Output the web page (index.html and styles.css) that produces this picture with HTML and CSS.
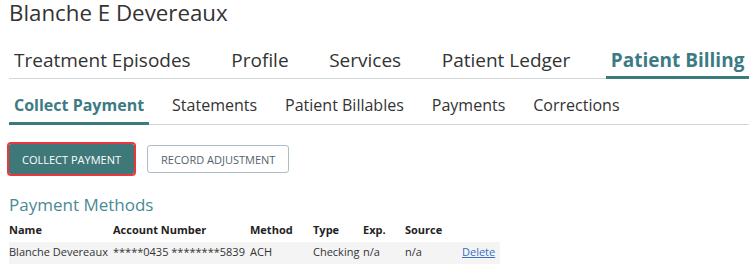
FILE: index.html
```html
<!DOCTYPE html>
<html lang="en">
<head>
    <meta charset="UTF-8">
    <meta name="viewport" content="width=device-width, initial-scale=1.0">
    <title>Patient Billing</title>
    <link rel="stylesheet" href="styles.css">
</head>
<body>
    <div class="page">
        <h1 class="patient-name">Blanche E Devereaux</h1>

        <!-- main tabs -->
        <nav class="tabs main-tabs">
            <a class="tab">Treatment Episodes</a>
            <a class="tab">Profile</a>
            <a class="tab">Services</a>
            <a class="tab">Patient Ledger</a>
            <a class="tab active">Patient Billing</a>
        </nav>

        <!-- billing sub tabs -->
        <nav class="tabs sub-tabs">
            <a class="tab active">Collect Payment</a>
            <a class="tab">Statements</a>
            <a class="tab">Patient Billables</a>
            <a class="tab">Payments</a>
            <a class="tab">Corrections</a>
        </nav>

        <div class="actions">
            <button type="button" class="btn btn-primary">COLLECT PAYMENT</button>
            <button type="button" class="btn btn-outline">RECORD ADJUSTMENT</button>
        </div>

        <h2 class="section-title">Payment Methods</h2>
        <table class="methods">
            <colgroup>
                <col class="c-name">
                <col class="c-account">
                <col class="c-method">
                <col class="c-type">
                <col class="c-exp">
                <col class="c-source">
                <col class="c-action">
            </colgroup>
            <thead>
                <tr>
                    <th>Name</th>
                    <th>Account Number</th>
                    <th>Method</th>
                    <th>Type</th>
                    <th>Exp.</th>
                    <th>Source</th>
                    <th></th>
                </tr>
            </thead>
            <tbody>
                <tr>
                    <td>Blanche Devereaux</td>
                    <td>*****0435 ********5839</td>
                    <td>ACH</td>
                    <td>Checking</td>
                    <td>n/a</td>
                    <td>n/a</td>
                    <td><a href="#" class="link">Delete</a></td>
                </tr>
            </tbody>
        </table>
    </div>
</body>
</html>
```

FILE: styles.css
```css
body {
    margin: 0;
    font-family: "Open Sans", "Liberation Sans", sans-serif;
    color: #333;
    background-color: #fff;
    overflow: hidden;
}
.page {
    padding-top: 1px;
    padding-left: 9px;
}
.patient-name {
    margin: -3px 0 0;
    font-size: 22.3px;
    line-height: 30px;
    font-weight: 400;
    color: #333;
}

/* tabs */
.tabs {
    display: flex;
    border-bottom: 1px solid #cfd7d9;
    white-space: nowrap;
}
.tab {
    padding: 0 5px;
    border-bottom: 3px solid transparent;
    margin-bottom: -1px;
    cursor: pointer;
}
.tab.active {
    font-weight: 700;
    color: #3c7b83;
    border-bottom-color: #3c7b7b;
}
.main-tabs {
    margin-top: 20px;
    gap: 30.6px;
    font-size: 19px;
}
.main-tabs .tab {
    line-height: 24px;
    padding-bottom: 4px;
}
.sub-tabs {
    margin-top: 15px;
    gap: 18px;
    font-size: 16px;
}
.sub-tabs .tab {
    line-height: 22px;
    padding-bottom: 6px;
}

/* buttons */
.actions {
    display: flex;
    align-items: center;
    gap: 13px;
    margin-top: 19px;
}
.btn {
    font-family: inherit;
    font-size: 11px;
    border-radius: 2px;
    padding: 0 12px;
    cursor: pointer;
}
.btn-primary {
    height: 30px;
    background-color: #3e7878;
    border: 1px solid #3e7878;
    color: #fff;
    outline: 2px solid #e8383d;
}
.btn-outline {
    height: 28px;
    padding: 0 13px;
    background-color: #fff;
    border: 1px solid #aebfc3;
    color: #52636b;
    border-radius: 3px;
}

.section-title {
    margin: 20px 0 0;
    font-size: 17px;
    line-height: 22px;
    font-weight: 400;
    color: #4a8a94;
}

/* payment methods table */
.methods {
    margin-top: 5px;
    border-collapse: collapse;
    table-layout: fixed;
    width: 491px;
    font-size: 11px;
    line-height: 16px;
    text-align: left;
}
.c-name { width: 104px; }
.c-account { width: 137px; }
.c-method { width: 63px; }
.c-type { width: 50px; }
.c-exp { width: 42px; }
.c-source { width: 57px; }
.c-action { width: 38px; }
.methods th {
    padding: 1px 0 4px;
    font-weight: 700;
    color: #222;
}
.methods td {
    padding: 2px 0 4px;
    white-space: nowrap;
    color: #333;
}
.methods tbody tr {
    background-color: #f4f4f4;
}
.link {
    color: #3a6fc4;
}
```
